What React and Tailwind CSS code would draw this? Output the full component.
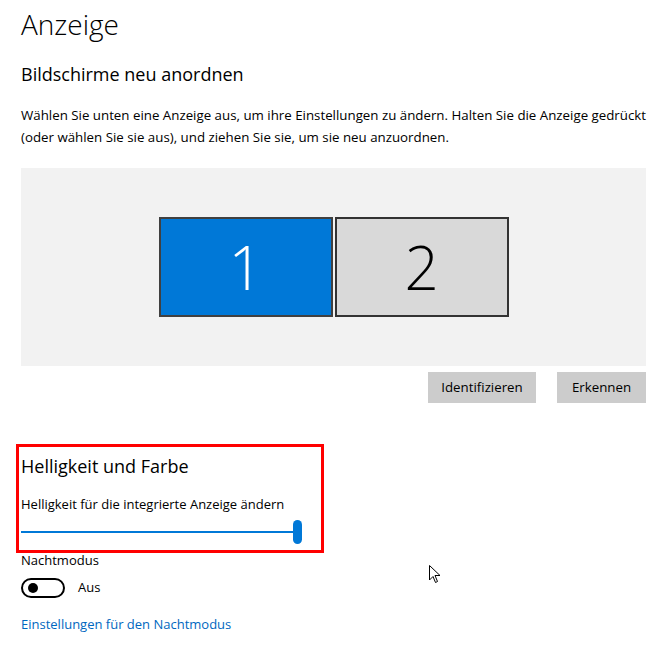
export default function App() {
  return (
    <div className="w-[666px] h-[649px] bg-white relative overflow-hidden text-black" style={{ fontFamily: '"Open Sans", "Noto Sans", sans-serif' }}>
      <div className="pl-[21px] pr-[20px]">
        {/* Page title */}
        <h1 className="text-[28px] font-light leading-[36px] pt-[6px]">Anzeige</h1>

        {/* Arrange displays */}
        <h2 className="text-[18px] leading-[26px] mt-[19px]">Bildschirme neu anordnen</h2>
        <p className="text-[13.3px] leading-[22px] mt-[17px] whitespace-nowrap">
          Wählen Sie unten eine Anzeige aus, um ihre Einstellungen zu ändern. Halten Sie die Anzeige gedrückt
          <br />
          (oder wählen Sie sie aus), und ziehen Sie sie, um sie neu anzuordnen.
        </p>

        <div className="mt-[20px] h-[198px] bg-[#f2f2f2] flex items-center justify-center">
          <div className="flex gap-[2px]">
            <div className="w-[174px] h-[100px] bg-[#0078d7] border-2 border-[#404040] flex items-center justify-center">
              <span className="text-white text-[60px] font-light leading-none">1</span>
            </div>
            <div className="w-[174px] h-[100px] bg-[#d9d9d9] border-2 border-[#333333] flex items-center justify-center">
              <span className="text-black text-[60px] font-light leading-none">2</span>
            </div>
          </div>
        </div>

        <div className="flex justify-end gap-[21px] mt-[6px]">
          <button className="w-[108px] h-[31px] bg-[#cccccc] text-[13.3px]">Identifizieren</button>
          <button className="w-[89px] h-[31px] bg-[#cccccc] text-[13.3px]">Erkennen</button>
        </div>
      </div>

      {/* Brightness and colour */}
      <div className="ml-[16px] mt-[41px] w-[308px] h-[109px] border-[3px] border-[#ff0000] pl-[2px]">
        <h2 className="text-[18px] leading-[26px] mt-[6px]">Helligkeit und Farbe</h2>
        <p className="text-[13px] leading-[20px] mt-[15px]">Helligkeit für die integrierte Anzeige ändern</p>
        <div className="relative h-[24px] mt-[6px] w-[282px]">
          <div className="absolute left-0 right-[6px] top-[11px] h-[2px] bg-[#0078d7]" />
          <div className="absolute left-[272px] top-0 w-[9px] h-[24px] rounded-full bg-[#0078d7]" />
        </div>
      </div>

      <div className="pl-[21px]">
        <p className="text-[13px] leading-[20px] -mt-[3px]">Nachtmodus</p>
        <div className="flex items-center gap-[13px] mt-[8px]">
          <div className="w-[44px] h-[20px] rounded-full border-2 border-black flex items-center pl-[5px]">
            <div className="w-[10px] h-[10px] rounded-full bg-black" />
          </div>
          <span className="text-[13px]">Aus</span>
        </div>
        <a className="block text-[13px] text-[#0067c0] mt-[17px]">Einstellungen für den Nachtmodus</a>
      </div>

      {/* Mouse cursor */}
      <svg className="absolute left-[429px] top-[565px]" width="12" height="19" viewBox="0 0 12 19">
        <path d="M0.5 0.5 L0.5 15 L4 11.5 L6.5 17.5 L8.5 16.5 L6 10.5 L11 10.5 Z" fill="white" stroke="black" strokeWidth="1" strokeLinejoin="miter" />
      </svg>
    </div>
  )
}
